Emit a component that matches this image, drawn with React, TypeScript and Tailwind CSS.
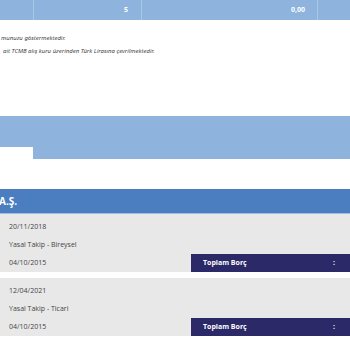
import React from "react";

interface DebtCardProps {
  date: string;
  type: string;
  startDate: string;
}

function DebtCard({ date, type, startDate }: DebtCardProps) {
  return (
    <div className="flex flex-col bg-[#e8e8e8] pt-[4px] text-[7px] text-[#444]">
      <div className="flex h-[18px] items-center pl-[9px]">{date}</div>
      <div className="flex h-[18px] items-center pl-[9px]">{type}</div>
      <div className="flex h-[18px] items-center">
        <span className="pl-[9px]">{startDate}</span>
        {/* toplam borç kutusu */}
        <div className="ml-auto flex h-full w-[159px] items-center bg-[#2b2967] font-bold text-white">
          <span className="pl-[12px]">Toplam Borç</span>
          <span className="ml-auto pr-[15px]">:</span>
        </div>
      </div>
    </div>
  );
}

export default function App() {
  return (
    <div
      className="flex h-[350px] w-[350px] flex-col overflow-hidden bg-white"
      style={{ fontFamily: '"Open Sans", "Liberation Sans", sans-serif' }}
    >
      {/* tablo alt satırı */}
      <div className="flex h-[20px] shrink-0 bg-[#8eb4dd] text-[7px] font-bold text-white">
        <div className="w-[34px] border-r border-[#a8c6e7]" />
        <div className="flex w-[108px] items-center justify-end border-r border-[#a8c6e7] pr-[13px]">5</div>
        <div className="flex w-[176px] items-center justify-end border-r border-[#a8c6e7] pr-[12px]">0,00</div>
        <div className="flex-1" />
      </div>

      {/* açıklama notları */}
      <div
        className="mt-[12px] flex flex-col text-[6px] italic leading-[13px] text-[#444]"
        style={{ fontFamily: '"Noto Sans", "Open Sans", sans-serif' }}
      >
        <p className="pl-[1px]">munuzu göstermektedir.</p>
        <p className="pl-[3px]">ait TCMB alış kuru üzerinden Türk Lirasına çevrilmektedir.</p>
      </div>

      {/* sekme bandı */}
      <div className="mt-[58px] flex h-[43px] shrink-0 flex-col">
        <div className="h-[31px] bg-[#8eb4dd]" />
        <div className="flex h-[12px]">
          <div className="w-[33px] bg-white" />
          <div className="flex-1 bg-[#8eb4dd]" />
        </div>
      </div>

      {/* kurum başlığı */}
      <div className="mt-[30px] flex h-[25px] shrink-0 items-center border-b border-[#9dbde3] bg-[#4a7ec0] text-[10px] font-bold text-white">
        <span className="-ml-[1px]">A.Ş.</span>
      </div>

      <div className="flex flex-col gap-[6px]">
        <DebtCard date="20/11/2018" type="Yasal Takip - Bireysel" startDate="04/10/2015" />
        <DebtCard date="12/04/2021" type="Yasal Takip - Ticari" startDate="04/10/2015" />
      </div>
    </div>
  );
}
